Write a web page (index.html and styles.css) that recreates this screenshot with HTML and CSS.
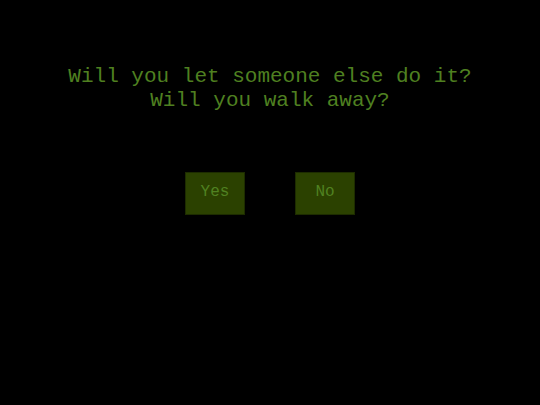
FILE: index.html
```html
<!DOCTYPE html>
<html>
<head>
<meta charset="utf-8">
<link rel="stylesheet" href="styles.css">
</head>
<body>
<div class="screen">
  <div class="question">
    <div>Will you let someone else do it?</div>
    <div>Will you walk away?</div>
  </div>
  <div class="choices">
    <button class="choice">Yes</button>
    <button class="choice">No</button>
  </div>
</div>
</body>
</html>
```
FILE: styles.css
```css
html, body {
  margin: 0;
  padding: 0;
  background: #000;
  width: 540px;
  height: 405px;
  overflow: hidden;
}
.screen {
  display: flex;
  flex-direction: column;
  align-items: center;
  padding-top: 65px;
  font-family: "Liberation Mono", monospace;
  color: #4f8020;
}
.question {
  font-size: 21px;
  line-height: 24px;
  text-align: center;
}
.choices {
  display: flex;
  gap: 50px;
  margin-top: 59px;
}
.choice {
  width: 60px;
  height: 43px;
  background: #2b4100;
  border: 1px solid #1d2c00;
  color: #508221;
  font-family: "Liberation Mono", monospace;
  font-size: 16px;
  padding: 0 0 3px 0;
  margin: 0;
}
```
